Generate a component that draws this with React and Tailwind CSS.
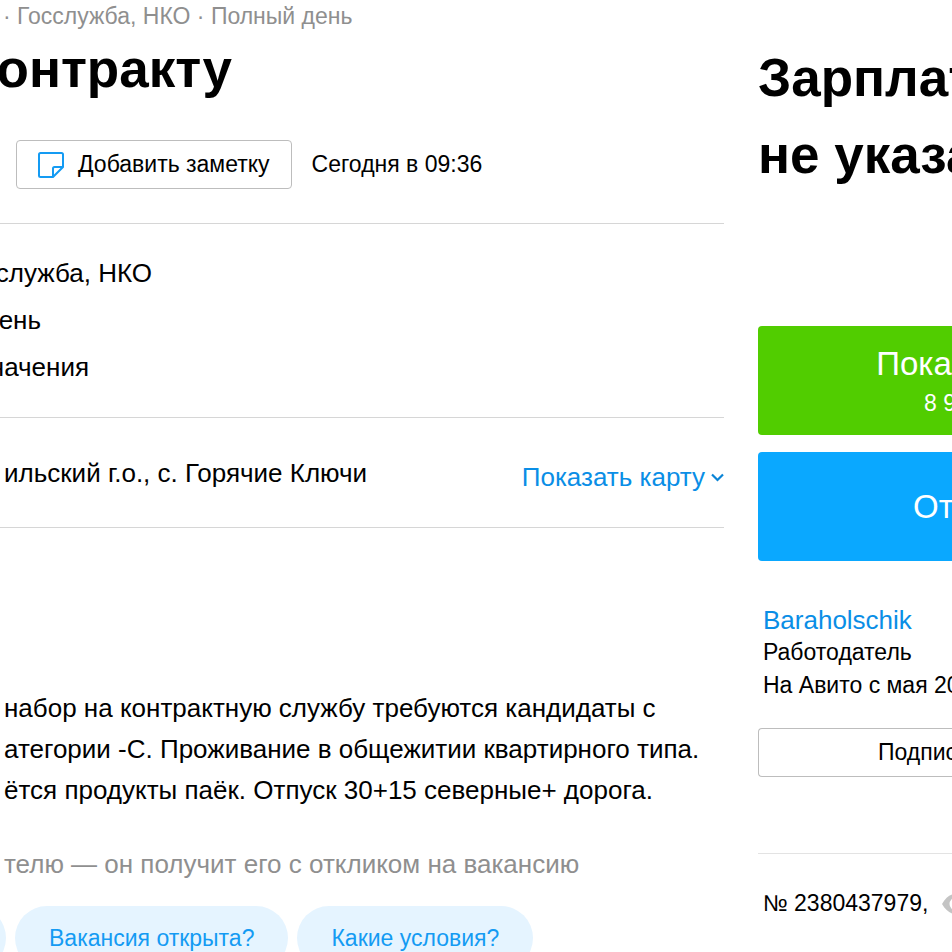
import React, { useState } from 'react';

const details = [
  { text: "служба, НКО", width: "w-[152px]" },
  { text: "ень", width: "w-[41px]" },
  { text: "начения", width: "w-[89px]" },
];

const description = [
  "набор на контрактную службу требуются кандидаты с",
  "атегории -С. Проживание в общежитии квартирного типа.",
  "ётся продукты паёк. Отпуск 30+15 северные+ дорога.",
];

const questions = ["Вакансия открыта?", "Какие условия?"];

// text that runs in from beyond the left edge of the window
const CutText = ({ width, children }) => (
  <span className={`flex justify-end overflow-hidden whitespace-nowrap ${width}`}>
    {children}
  </span>
);

const NoteIcon = () => (
  <svg className="w-[26px] h-[26px]" viewBox="0 0 26 26" fill="none" stroke="#149bf3" strokeWidth="2" strokeLinejoin="round" aria-hidden="true">
    <path d="M2.500 1H23.500Q25 1 25 2.500V15L15 25H2.500Q1 25 1 23.500V2.500Q1 1 2.500 1Z" />
    <path d="M15 25V16.500Q15 15 16.500 15H25" />
  </svg>
);

const ChevronIcon = () => (
  <svg className="w-[13px] h-[9px]" viewBox="0 0 13 9" fill="none" stroke="#0a84d6" strokeWidth="2.200" aria-hidden="true">
    <path d="M1 1.500L6.500 7L12 1.500" />
  </svg>
);

const EyeIcon = () => (
  <svg className="w-[28px] h-[20px] shrink-0" viewBox="0 0 28 20" aria-hidden="true">
    <path fill="#c4c4c4" fillRule="evenodd" d="M0 10C4 3.500 8 0 14 0S24 3.500 28 10C24 16.500 20 20 14 20S4 16.500 0 10ZM14 3.500A6.500 6.500 0 1 0 14 16.500A6.500 6.500 0 1 0 14 3.500Z" />
    <circle cx="14" cy="10" r="3.500" fill="#c4c4c4" />
  </svg>
);

const Vacancy = () => {
  const [mapOpen, setMapOpen] = useState(false);

  return (
    <main className="min-w-0 flex-1 pt-0.5">
      <p className="pl-[3px] text-[23px] leading-7 text-[#8f8f8f] whitespace-nowrap">
        · Госслужба, НКО · Полный день
      </p>
      <h1 className="mt-2 text-[53px] leading-[62px] font-bold">
        <CutText width="w-[232px]">онтракту</CutText>
      </h1>
      <div className="mt-10 flex items-center gap-5 pl-4 text-[23px]">
        <button type="button" className="flex h-[49px] items-center gap-[14px] rounded border border-[#bdbdbd] px-[21px] whitespace-nowrap">
          <NoteIcon />
          Добавить заметку
        </button>
        <span className="whitespace-nowrap">Сегодня в 09:36</span>
      </div>
      <ul className="mt-[34px] border-t border-[#d6d6d6] py-[26px] text-[26px] leading-[47px]">
        {details.map((item) => (
          <li key={item.text}>
            <CutText width={item.width}>{item.text}</CutText>
          </li>
        ))}
      </ul>
      <div className="flex items-start justify-between border-y border-[#d6d6d6] pt-[39px] pb-[30px] text-[26px]">
        <address className="pl-1 leading-8 whitespace-nowrap not-italic">
          ильский г.о., с. Горячие Ключи
        </address>
        <button
          type="button"
          aria-expanded={mapOpen}
          onClick={() => setMapOpen(!mapOpen)}
          className="flex items-center gap-1.5 leading-10 whitespace-nowrap text-[#0a8ee6]"
        >
          Показать карту
          <ChevronIcon />
        </button>
      </div>
      <div className="mt-[160px] pl-1 text-[26px] leading-[41px] whitespace-nowrap">
        {description.map((line) => (
          <p key={line}>{line}</p>
        ))}
      </div>
      <p className="mt-[33px] pl-1 text-[26px] leading-10 whitespace-nowrap text-[#8f8f8f]">
        телю — он получит его с откликом на вакансию
      </p>
      <div className="mt-[22px] flex gap-[9px] text-[23px] text-[#149bf3]">
        <button type="button" aria-label="Назад" className="-ml-[58px] h-16 w-16 shrink-0 rounded-full bg-[#e5f4ff]" />
        {questions.map((question) => (
          <button key={question} type="button" className="h-16 rounded-full bg-[#e5f4ff] px-[34px] whitespace-nowrap">
            {question}
          </button>
        ))}
      </div>
    </main>
  );
};

const Sidebar = () => (
  <aside className="w-[194px] shrink-0 overflow-hidden pt-[39px] text-[23px] whitespace-nowrap">
    <p className="text-[53px] leading-[77px] font-bold">
      Зарплат
      <br />
      не указа
    </p>
    <button type="button" className="mt-[133px] flex h-[109px] w-full flex-col justify-center gap-[5px] rounded-l bg-[#51cd00] text-white">
      <span className="pl-[118px] text-[33px] leading-10">Пока</span>
      <span className="pl-[166px] leading-7">8 9</span>
    </button>
    <button type="button" className="mt-[17px] flex h-[109px] w-full items-center rounded-l bg-[#0aa8ff] pl-[155px] text-[33px] text-white">
      От
    </button>
    <div className="mt-[43px] pl-[5px] leading-[33px]">
      <a href="#seller" className="block text-[26px] leading-8 text-[#0a8ee6]">Baraholschik</a>
      <p>Работодатель</p>
      <p>На Авито с мая 20</p>
    </div>
    <button type="button" className="mt-[26px] flex h-[49px] w-full items-center rounded-l border border-r-0 border-[#bdbdbd] pl-[119px]">
      Подпис
    </button>
    <div className="mt-[76px] flex items-center gap-[14px] border-t border-[#e3e3e3] pt-[33px] pl-[5px] leading-[33px]">
      <span>№ 2380437979,</span>
      <EyeIcon />
    </div>
  </aside>
);

export default function App() {
  return (
    <div className="flex h-screen gap-[34px] overflow-hidden bg-white font-['Liberation_Sans',Arial,sans-serif] text-black">
      <Vacancy />
      <Sidebar />
    </div>
  );
}
